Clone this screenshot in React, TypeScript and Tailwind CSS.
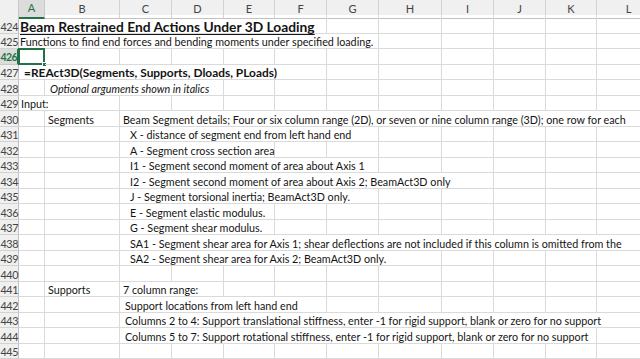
import React from "react";

type Cell = { span: number; text?: string; cls?: string };
type Row = { num: number; h: string; cells: Cell[]; sel?: boolean };

const spanCls: Record<number, string> = {
  1: "col-span-1",
  2: "col-span-2",
  3: "col-span-3",
  4: "col-span-4",
  5: "col-span-5",
  6: "col-span-6",
  7: "col-span-7",
  8: "col-span-8",
  9: "col-span-9",
  10: "col-span-10",
  11: "col-span-11",
  12: "col-span-12",
};

const GRID =
  "grid grid-cols-[19px_26px_75px_52px_52px_51px_52px_52px_63px_52px_52px_51px_64px]";

const e = (n: number): Cell[] => Array.from({ length: n }, () => ({ span: 1 }));

const ind = "text-[10.75px] pl-[10px]";
const ind2 = "text-[10.75px] pl-[5px]";

const rows: Row[] = [
  {
    num: 424,
    h: "h-[19px]",
    cells: [
      {
        span: 6,
        text: "Beam Restrained End Actions Under 3D Loading",
        cls: "text-[13.8px] font-bold underline underline-offset-[2px] pl-[1px]",
      },
      ...e(6),
    ],
  },
  {
    num: 425,
    h: "h-[15px]",
    cells: [
      {
        span: 7,
        text: "Functions to find end forces and bending moments under specified loading.",
        cls: "text-[10.75px] pl-[1px]",
      },
      ...e(5),
    ],
  },
  { num: 426, h: "h-[16px]", sel: true, cells: e(12) },
  {
    num: 427,
    h: "h-[15px]",
    cells: [
      {
        span: 6,
        text: "=REAct3D(Segments, Supports, Dloads, PLoads)",
        cls: "text-[11.9px] font-bold pl-[5px]",
      },
      ...e(6),
    ],
  },
  {
    num: 428,
    h: "h-[16px]",
    cells: [
      { span: 1 },
      {
        span: 3,
        text: "Optional arguments shown in italics",
        cls: "text-[10.75px] italic pl-[5px]",
      },
      ...e(8),
    ],
  },
  {
    num: 429,
    h: "h-[15px]",
    cells: [{ span: 2, text: "Input:", cls: "text-[10.75px] pl-[2px]" }, ...e(10)],
  },
  {
    num: 430,
    h: "h-[16px]",
    cells: [
      { span: 1 },
      { span: 1, text: "Segments", cls: "text-[10.75px] pl-[3px]" },
      {
        span: 10,
        text: "Beam Segment details; Four or six column range (2D), or seven or nine column range (3D); one row for each",
        cls: "text-[10.75px] pl-[3px]",
      },
    ],
  },
  {
    num: 431,
    h: "h-[15px]",
    cells: [...e(2), { span: 5, text: "X - distance of segment end from left hand end", cls: ind }, ...e(5)],
  },
  {
    num: 432,
    h: "h-[16px]",
    cells: [...e(2), { span: 3, text: "A - Segment cross section area", cls: ind }, ...e(7)],
  },
  {
    num: 433,
    h: "h-[15px]",
    cells: [...e(2), { span: 5, text: "I1 - Segment second moment of area about Axis 1", cls: ind }, ...e(5)],
  },
  {
    num: 434,
    h: "h-[16px]",
    cells: [
      ...e(2),
      { span: 7, text: "I2 - Segment second moment of area about Axis 2; BeamAct3D only", cls: ind },
      ...e(3),
    ],
  },
  {
    num: 435,
    h: "h-[15px]",
    cells: [...e(2), { span: 5, text: "J - Segment torsional inertia; BeamAct3D only.", cls: ind }, ...e(5)],
  },
  {
    num: 436,
    h: "h-[16px]",
    cells: [...e(2), { span: 3, text: "E - Segment elastic modulus.", cls: ind }, ...e(7)],
  },
  {
    num: 437,
    h: "h-[15px]",
    cells: [...e(2), { span: 3, text: "G - Segment shear modulus.", cls: ind }, ...e(7)],
  },
  {
    num: 438,
    h: "h-[16px]",
    cells: [
      ...e(2),
      {
        span: 10,
        text: "SA1 - Segment shear area for Axis 1; shear deflections are not included if this column is omitted from the",
        cls: ind,
      },
    ],
  },
  {
    num: 439,
    h: "h-[15px]",
    cells: [...e(2), { span: 6, text: "SA2 - Segment shear area for Axis 2; BeamAct3D only.", cls: ind }, ...e(4)],
  },
  { num: 440, h: "h-[16px]", cells: e(12) },
  {
    num: 441,
    h: "h-[15px]",
    cells: [
      { span: 1 },
      { span: 1, text: "Supports", cls: "text-[10.75px] pl-[3px]" },
      { span: 2, text: "7 column range:", cls: "text-[10.75px] pl-[3px]" },
      ...e(8),
    ],
  },
  {
    num: 442,
    h: "h-[16px]",
    cells: [...e(2), { span: 4, text: "Support locations from left hand end", cls: ind2 }, ...e(6)],
  },
  {
    num: 443,
    h: "h-[15px]",
    cells: [
      ...e(2),
      {
        span: 10,
        text: "Columns 2 to 4: Support translational stiffness, enter -1 for rigid support, blank or zero for no support",
        cls: ind2,
      },
    ],
  },
  {
    num: 444,
    h: "h-[16px]",
    cells: [
      ...e(2),
      {
        span: 9,
        text: "Columns 5 to 7: Support rotational stiffness, enter -1 for rigid support, blank or zero for no support",
        cls: ind2,
      },
      ...e(1),
    ],
  },
  { num: 445, h: "h-[15px]", cells: e(12) },
];

const letters = ["A", "B", "C", "D", "E", "F", "G", "H", "I", "J", "K", "L"];

export default function App() {
  return (
    <div className="w-[640px] h-[359px] overflow-hidden bg-white font-['Lato',sans-serif] text-[#141414]">
      <div className={`${GRID} h-[15px] bg-[#f0f0f0]`}>
        <div className="border-r border-b border-[#c9c9c9] bg-[#f0f0f0]" />
        {letters.map((l, i) => (
          <div
            key={l}
            className={
              i === 0
                ? "flex items-center justify-center border-r border-[#c9c9c9] border-b-2 border-b-[#217346] bg-[#dcdcdc] text-[#217346] text-[11px]"
                : "flex items-center justify-center border-r border-b border-[#d2d2d2] border-b-[#c2c2c2] text-[#444] text-[11px]"
            }
          >
            {l}
          </div>
        ))}
      </div>
      {rows.map((r) => (
        <div key={r.num} className={`${GRID} ${r.h}`}>
          <div
            className={
              r.sel
                ? "flex items-end justify-end bg-[#dcdcdc] border-r-2 border-r-[#217346] border-b border-b-[#c9c9c9] text-[#217346] font-bold text-[10.5px] tracking-[-0.6px] leading-[13px]"
                : "flex items-end justify-end bg-[#f0f0f0] border-r border-r-[#c2c2c2] border-b border-b-[#d2d2d2] text-[#444] text-[10.8px] tracking-[-0.4px] leading-[13px]"
            }
          >
            {r.num}
          </div>
          {r.cells.map((c, i) => (
            <div
              key={i}
              className={`${spanCls[c.span]} relative flex items-end whitespace-nowrap border-r border-b border-[#dadada] leading-[12px] ${
                c.cls ?? ""
              }`}
            >
              {c.text}
              {r.sel && i === 0 && (
                <div className="absolute left-[-1px] top-[-1px] right-[-1px] bottom-[-1px] border-2 border-[#217346]">
                  <div className="absolute right-[-4px] bottom-[-4px] w-[5px] h-[5px] bg-[#217346] border border-white" />
                </div>
              )}
            </div>
          ))}
        </div>
      ))}
    </div>
  );
}
